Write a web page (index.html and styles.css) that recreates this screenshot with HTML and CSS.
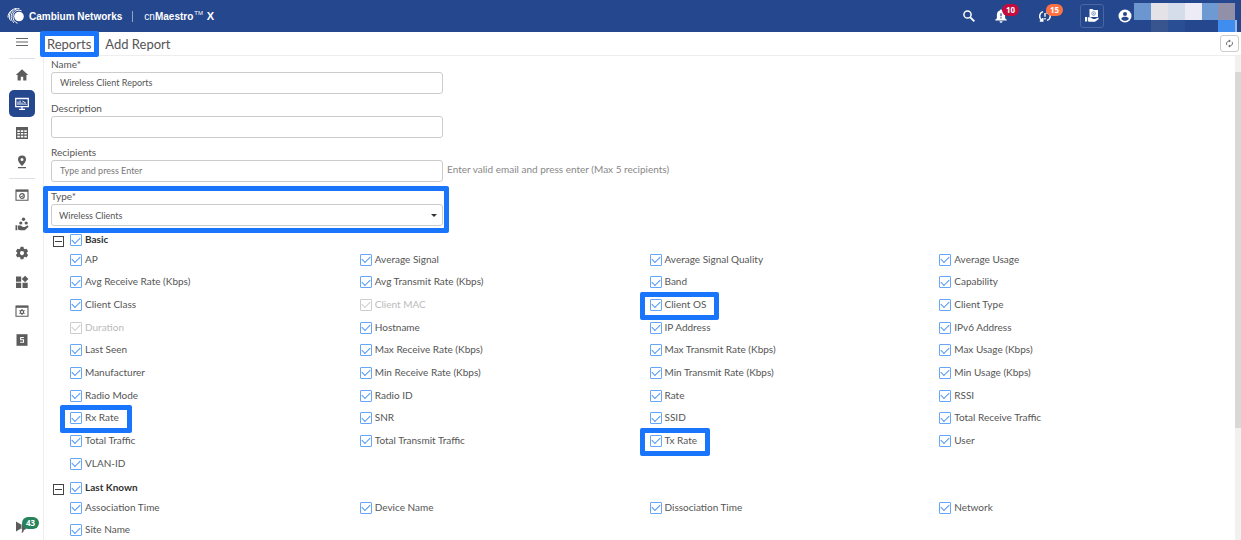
FILE: index.html
```html
<!DOCTYPE html>
<html lang="en">
  <head>
    <meta charset="UTF-8" />
    <meta name="viewport" content="width=device-width, initial-scale=1.0" />
    <title>cnMaestro X - Add Report</title>
    <link rel="stylesheet" href="styles.css">
  </head>
  <body>
    <!-- Top bar -->
    <header class="topbar">
      <svg class="logo" viewBox="0 0 18 18" fill="#fff">
        <circle cx="12" cy="9.5" r="4.800" />
        <g fill="none" stroke="#fff" stroke-width="1">
          <path d="M14.500 3.800C10 2 6 4.500 6 9.500c0 3.500 1.800 5.700 4.500 6.800" />
          <path d="M12.500 1.800C8 1 3.900 5 4.200 10.500c.2 2.300 1.200 4 2.800 5.200" />
          <path d="M9.500 1.500C5 1.500 1.800 6 2.400 11c.2 1 .6 1.800 1.200 2.600" />
          <path d="M5.500 2.800C2.500 4.500.8 7.500 1 10.500" />
        </g>
      </svg>
      <span class="brand">Cambium Networks</span>
      <span class="product">cn<b>Maestro</b><sup>TM</sup> <b class="edition">X</b></span>

      <div class="actions">
        <button class="icon-btn" aria-label="Search">
          <svg viewBox="0 0 14 14" fill="none" stroke="#fff">
            <circle cx="5.500" cy="5.500" r="3.600" stroke-width="1.500" />
            <path d="M8.300 8.300l4 4" stroke-width="1.900" />
          </svg>
        </button>
        <button class="icon-btn bell" aria-label="Alarms">
          <svg viewBox="0 0 14 14">
            <path fill="#fff" d="M7 .5c.7 0 1.100.5 1.100 1.100 2 .5 3 2.100 3 4.100v3.500l1.600 1.600v.8H1.300v-.8l1.600-1.600V5.700c0-2 1-3.600 3-4.100C5.900 1 6.300.5 7 .5zM5.500 12.200h3a1.500 1.500 0 0 1-3 0z" />
            <path stroke="#25478d" stroke-width="1.200" d="M7 4.200v3M7 8.200v1.200" />
          </svg>
          <span class="badge red">10</span>
        </button>
        <button class="icon-btn sync" aria-label="Sync jobs">
          <svg viewBox="0 0 14 14" fill="none" stroke="#fff" stroke-width="1.400">
            <path d="M5 2.600C.8 4 .8 9.500 4 11.400M1.800 12h3V9M9 11.400c4.200-1.400 4.200-6.900 1-8.800M12.200 2h-3v3" />
            <path d="M7 4v3.800M7 9v1.500" />
          </svg>
          <span class="badge orange">15</span>
        </button>
        <button class="icon-btn boxed" aria-label="Services">
          <svg viewBox="0 0 16 16" fill="#fff">
            <path d="M5.500 1h3l1 1H14v7H5.500z" />
            <path d="M1 9h2v4.500H1zM3.800 9.300h2.700L9 11h2.200l2.800-1.400c.8.3.9 1 .4 1.600L11 13.800H5l-1.200-.7z" />
            <circle cx="9.600" cy="5.500" r="1.800" fill="none" stroke="#7f97c6" />
            <path d="M9.600 4.800v1.500" stroke="#7f97c6" />
          </svg>
        </button>
        <button class="icon-btn user" aria-label="Account">
          <svg viewBox="0 0 14 14">
            <circle cx="7" cy="7" r="6.500" fill="#fff" />
            <circle cx="7" cy="5" r="2" fill="#25478d" />
            <path fill="#25478d" d="M3.200 9.700C3.600 8.300 5.500 7.800 7 7.800s3.400.5 3.800 1.900C10 11 8.700 11.800 7 11.800S4 11 3.200 9.700z" />
          </svg>
        </button>
        <!-- redacted account name -->
        <svg class="redacted" viewBox="0 0 103 29" shape-rendering="crispEdges">
          <path fill="#6c96cf" d="M0 0h17v17H0z" />
          <path fill="#e4e2e6" d="M17 0h17v17H17z" />
          <path fill="#d5dcea" d="M34 0h17v17H34z" />
          <path fill="#edebf6" d="M51 0h17v17H51z" />
          <path fill="#6d9ad3" d="M68 0h16v17H68z" />
          <path fill="#9290a8" d="M84 0h17v17H84z" />
          <path fill="#38558f" d="M17 17h17v12H17z" />
          <path fill="#294e93" d="M34 17h17v12H34z" />
          <path fill="#408df0" d="M84 17h17v12H84z" />
          <path fill="#9db8e6" d="M101 17h2v12h-2z" />
        </svg>
      </div>
    </header>

    <div class="layout">
      <!-- Side navigation -->
      <nav class="sidebar">
        <button class="menu-btn" aria-label="Menu">
          <svg viewBox="0 0 14 14" stroke="#666" stroke-width="1.200"><path d="M1 3.500h12M1 7h12M1 10.500h12" /></svg>
        </button>
        <hr />
        <a href="#" aria-label="Home">
          <svg viewBox="0 0 14 14"><path d="M7 1.200L.8 7h1.800v5.500h3.200V8.800h2.400v3.700h3.200V7h1.800z" /></svg>
        </a>
        <a href="#" class="active" aria-label="Monitor">
          <svg class="outline" viewBox="0 0 14 14">
            <path d="M.7 1.500h12.600v8.200H.7zM7 9.700v2M4 12.400h6" stroke-width="1.300" />
            <path d="M3 8V4.500M5 8V3.500M7 8V5.500M9 8V6.300M11 8V7M7.500 4l3.500 2.300" />
          </svg>
        </a>
        <a href="#" aria-label="Inventory">
          <svg viewBox="0 0 14 14"><path fill-rule="evenodd" d="M1 1h12v12H1zM2.300 4.300v1.600h2.500V4.300zm3.500 0v1.600h2.500V4.300zm3.500 0v1.600h2.500V4.300zm-7 2.700v1.600h2.500V7zm3.500 0v1.600h2.500V7zm3.500 0v1.600h2.500V7zm-7 2.800v1.700h2.500V9.800zm3.500 0v1.700h2.500V9.800zm3.500 0v1.700h2.500V9.800z" /></svg>
        </a>
        <a href="#" aria-label="Maps">
          <svg viewBox="0 0 14 14"><path fill-rule="evenodd" d="M7 .5a4 4 0 0 1 4 4c0 2.800-4 6.500-4 6.500S3 7.300 3 4.500a4 4 0 0 1 4-4zM7 3a1.500 1.500 0 1 0 0 3 1.500 1.500 0 0 0 0-3zM3 12h8v1.300H3z" /></svg>
        </a>
        <hr />
        <a href="#" aria-label="Configuration">
          <svg class="outline" viewBox="0 0 14 14">
            <path d="M1 2h12v10.300H1z" stroke-width="1.100" /><path d="M1 2.800h12" stroke-width="2" />
            <circle cx="7" cy="8" r="2.300" stroke-width="1.200" /><path d="M5.800 8l1 1 1.700-2" />
          </svg>
        </a>
        <a href="#" aria-label="Network services">
          <svg viewBox="0 0 14 14">
            <circle cx="8.500" cy="2.200" r="1.700" /><circle cx="5.800" cy="6" r="1.600" /><circle cx="11.200" cy="6" r="1.600" />
            <path d="M.5 8.300h1.800v5H.5zM3 8.500h2.500L8 10h1.500l3-1.500c1 .2 1.300 1 .6 1.700l-3.300 3H5l-2-.7z" />
          </svg>
        </a>
        <a href="#" aria-label="Administration">
          <svg viewBox="0 0 14 14"><path fill-rule="evenodd" d="M5.600.8h2.800l.4 1.800 1.100.7 1.700-.6L13.100 5.200l-1.300 1.300v1.100l1.300 1.300-1.500 2.500-1.700-.6-1.100.7-.4 1.800H5.600l-.4-1.800-1.100-.7-1.700.6L.9 8.900l1.300-1.300V6.500L.9 5.200l1.500-2.500 1.700.6 1.100-.7zM7 5a2.100 2.100 0 1 0 0 4.200A2.100 2.100 0 0 0 7 5z" /></svg>
        </a>
        <a href="#" aria-label="Applications">
          <svg viewBox="0 0 14 14"><path d="M1 1.500h5.200v5.200H1zM1 7.800h5.200V13H1zM7.500 7.800h5.200V13H7.500zM10.100.7l3.300 3.300-3.300 3.300L6.800 4z" /></svg>
        </a>
        <a href="#" aria-label="System settings">
          <svg class="outline" viewBox="0 0 14 14">
            <path d="M1 2h12v10.300H1z" stroke-width="1.100" /><path d="M1 2.800h12" stroke-width="2" />
            <circle cx="7" cy="8" r="1.700" stroke-width="1.200" />
            <path d="M7 5v1M7 10v1M4.400 6.500l.9.500M8.700 9l.9.500M4.400 9.500l.9-.5M8.700 7l.9-.5" />
          </svg>
        </a>
        <a href="#" aria-label="Subscriptions">
          <svg viewBox="0 0 14 14"><path d="M1.500 1.200h11v11.600h-11z" /><path d="M8.900 4.500H5.700v2.300h2.800v2.400H5.100" fill="none" stroke="#fff" stroke-width="1.100" /></svg>
        </a>
        <a href="#" class="news" aria-label="Announcements">
          <svg viewBox="0 0 14 14"><path d="M1 2.500l5 3v4l-5 3zM6.500 5.500L11 3v7l-2 1-1 2.500H6.500l.8-2.700-.8-.8z" /></svg>
          <span class="badge green">43</span>
        </a>
      </nav>

      <main class="content">
        <div class="page-header">
          <h1><a href="#" class="highlight">Reports</a><span class="crumb">Add Report</span></h1>
          <button class="refresh" aria-label="Refresh">
            <svg viewBox="0 0 14 14" fill="none" stroke="#555" stroke-width="1.500">
              <path d="M3 9.500C1.200 6.500 3.500 3 7.300 3M11 4.500c1.800 3-.5 6.500-4.300 6.500" />
              <path d="M6.500.8v4.400L9 3zM7.500 8.800v4.400L5 11z" fill="#555" stroke="none" />
            </svg>
          </button>
        </div>

        <div class="panel">
          <form class="report-form">
            <div class="field">
              <label for="name">Name*</label>
              <input type="text" id="name" value="Wireless Client Reports" />
            </div>
            <div class="field">
              <label for="description">Description</label>
              <input type="text" id="description" />
            </div>
            <div class="field">
              <label for="recipients">Recipients</label>
              <div class="with-hint">
                <input type="text" id="recipients" placeholder="Type and press Enter" />
                <span class="hint">Enter valid email and press enter (Max 5 recipients)</span>
              </div>
            </div>
            <div class="field type highlight">
              <label for="type">Type*</label>
              <div class="select-wrap">
                <select id="type"><option>Wireless Clients</option></select>
              </div>
            </div>

            <section class="group">
              <div class="group-head">
                <button type="button" class="collapse" aria-label="Collapse Basic"></button>
                <label><input type="checkbox" checked />Basic</label>
              </div>
              <div class="options">
                <label><input type="checkbox" checked />AP</label>
                <label><input type="checkbox" checked />Average Signal</label>
                <label><input type="checkbox" checked />Average Signal Quality</label>
                <label><input type="checkbox" checked />Average Usage</label>
                <label><input type="checkbox" checked />Avg Receive Rate (Kbps)</label>
                <label><input type="checkbox" checked />Avg Transmit Rate (Kbps)</label>
                <label><input type="checkbox" checked />Band</label>
                <label><input type="checkbox" checked />Capability</label>
                <label><input type="checkbox" checked />Client Class</label>
                <label class="disabled"><input type="checkbox" checked disabled />Client MAC</label>
                <label class="highlight"><input type="checkbox" checked />Client OS</label>
                <label><input type="checkbox" checked />Client Type</label>
                <label class="disabled"><input type="checkbox" checked disabled />Duration</label>
                <label><input type="checkbox" checked />Hostname</label>
                <label><input type="checkbox" checked />IP Address</label>
                <label><input type="checkbox" checked />IPv6 Address</label>
                <label><input type="checkbox" checked />Last Seen</label>
                <label><input type="checkbox" checked />Max Receive Rate (Kbps)</label>
                <label><input type="checkbox" checked />Max Transmit Rate (Kbps)</label>
                <label><input type="checkbox" checked />Max Usage (Kbps)</label>
                <label><input type="checkbox" checked />Manufacturer</label>
                <label><input type="checkbox" checked />Min Receive Rate (Kbps)</label>
                <label><input type="checkbox" checked />Min Transmit Rate (Kbps)</label>
                <label><input type="checkbox" checked />Min Usage (Kbps)</label>
                <label><input type="checkbox" checked />Radio Mode</label>
                <label><input type="checkbox" checked />Radio ID</label>
                <label><input type="checkbox" checked />Rate</label>
                <label><input type="checkbox" checked />RSSI</label>
                <label class="highlight"><input type="checkbox" checked />Rx Rate</label>
                <label><input type="checkbox" checked />SNR</label>
                <label><input type="checkbox" checked />SSID</label>
                <label><input type="checkbox" checked />Total Receive Traffic</label>
                <label><input type="checkbox" checked />Total Traffic</label>
                <label><input type="checkbox" checked />Total Transmit Traffic</label>
                <label class="highlight"><input type="checkbox" checked />Tx Rate</label>
                <label><input type="checkbox" checked />User</label>
                <label><input type="checkbox" checked />VLAN-ID</label>
              </div>
            </section>

            <section class="group">
              <div class="group-head">
                <button type="button" class="collapse" aria-label="Collapse Last Known"></button>
                <label><input type="checkbox" checked />Last Known</label>
              </div>
              <div class="options">
                <label><input type="checkbox" checked />Association Time</label>
                <label><input type="checkbox" checked />Device Name</label>
                <label><input type="checkbox" checked />Dissociation Time</label>
                <label><input type="checkbox" checked />Network</label>
                <label><input type="checkbox" checked />Site Name</label>
              </div>
            </section>
          </form>
          <div class="scroll-track"><div class="scroll-thumb"></div></div>
        </div>
      </main>
    </div>
  </body>
</html>
```
FILE: styles.css
```css
* {
  box-sizing: border-box;
}

body {
  margin: 0;
  height: 100vh;
  display: flex;
  flex-direction: column;
  overflow: hidden;
  background: #fff;
  color: #555;
  font-family: Lato, "Open Sans", sans-serif;
  font-size: 10px;
}

button,
input,
select {
  font-family: inherit;
  font-size: inherit;
  color: inherit;
}

button {
  padding: 0;
  border: none;
  background: transparent;
  cursor: pointer;
}

svg {
  display: block;
}

/* Top bar */
.topbar {
  flex: none;
  height: 32px;
  display: flex;
  align-items: center;
  padding: 0 4px 0 7px;
  background: #25478d;
  color: #fff;
}

.logo {
  width: 18px;
  height: 18px;
}

.brand {
  margin-left: 4px;
  padding-right: 10px;
  border-right: 1px solid #92a3c6;
  font: bold 10px/11px "Liberation Sans", sans-serif;
}

.product {
  margin-left: 11px;
  font: 10px/12px "Liberation Sans", sans-serif;
}

.product sup {
  margin: 0 1px;
  font-size: 6px;
  line-height: 0;
}

.product .edition {
  font-size: 11px;
}

.actions {
  display: flex;
  align-items: center;
  margin-left: auto;
}

.icon-btn {
  position: relative;
  color: #fff;
}

.icon-btn svg {
  width: 14px;
  height: 14px;
}

.bell {
  margin-left: 18px;
}

.sync {
  margin-left: 30px;
}

.boxed {
  margin: 0 14px 0 28px;
  padding: 3px;
  border: 1px solid #4a67a2;
  border-radius: 3px;
}

.boxed svg {
  width: 16px;
  height: 16px;
}

.redacted {
  width: 103px;
  height: 29px;
  margin: 3px 0 0 2px;
}

.badge {
  position: absolute;
  padding: 0 4px;
  border-radius: 6px;
  color: #fff;
  font: bold 8px/12px "Open Sans", sans-serif;
}

.icon-btn .badge {
  top: -5px;
  left: 8px;
}

.badge.red {
  background: #c40c3e;
}

.badge.orange {
  background: #ff7043;
}

.badge.green {
  top: -2px;
  left: 22px;
  background: #27835c;
}

/* Side navigation */
.layout {
  flex: 1;
  min-height: 0;
  display: flex;
}

.sidebar {
  flex: none;
  width: 43px;
  display: flex;
  flex-direction: column;
  align-items: center;
}

.sidebar svg {
  width: 14px;
  height: 14px;
  fill: #5c5c5c;
}

.sidebar .outline {
  fill: none;
  stroke: #5c5c5c;
}

.sidebar .active .outline {
  stroke: #fff;
}

.sidebar hr {
  width: 26px;
  margin: 2px 0 1px;
  border: none;
  border-top: 1px solid #dde1e5;
}

.menu-btn {
  height: 24px;
  padding-bottom: 4px;
}

.sidebar a {
  position: relative;
  width: 43px;
  height: 29px;
  display: grid;
  place-items: center;
}

.sidebar a.active {
  width: 26px;
  height: 27px;
  margin: 1px 0;
  border-radius: 5px;
  background: #25478d;
}

.sidebar a.news {
  height: 14px;
  margin: auto 0 7px;
}

/* Page header */
.content {
  flex: 1;
  min-width: 0;
  display: flex;
  flex-direction: column;
}

.page-header {
  flex: none;
  height: 23px;
  display: flex;
  align-items: center;
  justify-content: space-between;
  padding: 0 2px 0 4px;
}

.page-header h1 {
  margin: 0;
  font-size: 13px;
  font-weight: normal;
  line-height: 14px;
}

.page-header a {
  color: inherit;
  text-decoration: none;
}

.crumb {
  margin-left: 14px;
}

.refresh {
  width: 19px;
  height: 17px;
  display: grid;
  place-items: center;
  border: 1px solid #ccc;
  border-radius: 3px;
}

.refresh svg {
  width: 9px;
  height: 9px;
}

/* Report form */
.panel {
  flex: 1;
  min-height: 0;
  display: flex;
  border-top: 1px solid #eee;
  border-left: 1px solid #eee;
}

.report-form {
  flex: 1;
  min-width: 0;
  padding: 0 6px 0 7px;
}

.field {
  max-width: 392px;
  margin-bottom: 6px;
}

.field label {
  display: block;
  line-height: 16px;
}

.field input,
.field select {
  display: block;
  width: 100%;
  height: 22px;
  padding: 0 8px 1px;
  border: 1px solid #ccc;
  border-radius: 3px;
  background: #fff;
  font-size: 9px;
}

.field input::placeholder {
  color: #777;
}

.with-hint {
  display: flex;
  align-items: center;
}

.with-hint input {
  flex: none;
}

.hint {
  margin-left: 4px;
  padding-bottom: 4px;
  color: #888;
  white-space: nowrap;
}

.select-wrap {
  position: relative;
}

.field select {
  appearance: none;
  padding: 0 7px;
}

/* dropdown caret */
.select-wrap::after {
  content: "";
  position: absolute;
  top: 10px;
  right: 6px;
  border: 3px solid transparent;
  border-top-color: #333;
  border-bottom: none;
  pointer-events: none;
}

/* Option groups */
.group {
  margin-bottom: 5px;
}

.group label {
  position: relative;
  display: flex;
  align-items: center;
  width: fit-content;
  padding-bottom: 2px;
  line-height: 14px;
}

.group-head {
  display: flex;
  align-items: center;
  gap: 6px;
  padding-left: 2px;
  color: #333;
  font-weight: bold;
}

.collapse {
  width: 11px;
  height: 11px;
  display: grid;
  place-items: center;
  margin-top: 2px;
  border: 1px solid #444;
}

.collapse::before {
  content: "";
  width: 7px;
  height: 1px;
  background: #444;
}

.options {
  display: grid;
  grid-template-columns: repeat(4, 1fr);
  grid-auto-rows: 23px 22px 23px;
  align-items: center;
  padding-left: 19px;
}

.group input {
  appearance: none;
  flex: none;
  width: 12px;
  height: 12px;
  display: grid;
  place-items: center;
  margin: 2px 3px 0 0;
  border: 1px solid #66a6f8;
  border-radius: 1px;
  background: #fff;
}

/* tick */
.group input:checked::before {
  content: "";
  width: 7px;
  height: 4px;
  margin-bottom: 2px;
  border: solid #4a94f5;
  border-width: 0 0 1px 1px;
  transform: rotate(-45deg);
}

.group .disabled {
  color: #bbb;
}

.group input:disabled,
.group input:disabled::before {
  border-color: #ccc;
}

/* Callout frames */
.highlight {
  position: relative;
}

.highlight::after {
  content: "";
  position: absolute;
  inset: -5px -8px -5px -7px;
  border: 5px solid #1976fc;
  border-radius: 2px;
  pointer-events: none;
}

.type.highlight::after {
  inset: -2px -6px -7px -8px;
}

.options .highlight::after {
  inset: -5px -13px -7px -10px;
}

/* Scrollbar */
.scroll-track {
  flex: none;
  width: 6px;
  padding-top: 16px;
  background: #f1f1f1;
}

.scroll-thumb {
  height: 76%;
  background: #d8d8d8;
}
```
